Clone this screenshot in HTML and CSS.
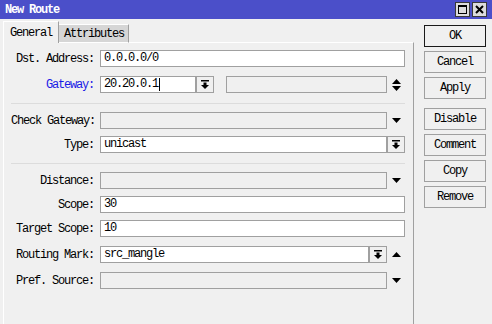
FILE: index.html
```html
<!DOCTYPE html>
<html lang="en">
<head>
    <meta charset="UTF-8">
    <title>New Route</title>
    <link rel="stylesheet" href="styles.css">
</head>
<body>
<div class="window">
    <div class="titlebar">
        <span class="title">New Route</span>
        <div class="title-btns">
            <span class="tbtn"><span class="max-box"></span></span>
            <span class="tbtn">
                <svg width="9" height="9" viewBox="0 0 9 9"><path d="M1 1L8 8M8 1L1 8" stroke="#000" stroke-width="2"/></svg>
            </span>
        </div>
    </div>
    <div class="content">
        <div class="main">
            <div class="tabs">
                <div class="tab active">General</div>
                <div class="tab">Attributes</div>
            </div>
            <div class="panel">
                <!-- destination / gateway -->
                <div class="group first">
                    <div class="row">
                        <label class="label">Dst. Address:</label>
                        <div class="field">0.0.0.0/0</div>
                    </div>
                    <div class="row spaced">
                        <label class="label link">Gateway:</label>
                        <div class="field gw">20.20.0.1<span class="caret"></span></div>
                        <span class="drop">
                            <svg width="8" height="9" viewBox="0 0 8 9"><rect x="0" y="0" width="8" height="1.5"/><rect x="2.5" y="2.5" width="3" height="3"/><path d="M0 5h8l-4 4z"/></svg>
                        </span>
                        <div class="field off gw-extra"></div>
                        <span class="arrow">
                            <svg width="9" height="12" viewBox="0 0 9 12"><path d="M0 5h9l-4.5-5z"/><path d="M0 7h9l-4.5 5z"/></svg>
                        </span>
                    </div>
                </div>

                <!-- check / type -->
                <div class="group">
                    <div class="row">
                        <label class="label">Check Gateway:</label>
                        <div class="field off"></div>
                        <span class="arrow">
                            <svg width="9" height="5" viewBox="0 0 9 5"><path d="M0 0h9l-4.5 5z"/></svg>
                        </span>
                    </div>
                    <div class="row">
                        <label class="label">Type:</label>
                        <div class="field">unicast</div>
                        <span class="drop">
                            <svg width="8" height="9" viewBox="0 0 8 9"><rect x="0" y="0" width="8" height="1.5"/><rect x="2.5" y="2.5" width="3" height="3"/><path d="M0 5h8l-4 4z"/></svg>
                        </span>
                    </div>
                </div>

                <!-- distance / scope / marks -->
                <div class="group">
                    <div class="row">
                        <label class="label">Distance:</label>
                        <div class="field off"></div>
                        <span class="arrow">
                            <svg width="9" height="5" viewBox="0 0 9 5"><path d="M0 0h9l-4.5 5z"/></svg>
                        </span>
                    </div>
                    <div class="row">
                        <label class="label">Scope:</label>
                        <div class="field">30</div>
                    </div>
                    <div class="row">
                        <label class="label">Target Scope:</label>
                        <div class="field">10</div>
                    </div>
                    <div class="row spaced">
                        <label class="label">Routing Mark:</label>
                        <div class="field">src_mangle</div>
                        <span class="drop">
                            <svg width="8" height="9" viewBox="0 0 8 9"><rect x="0" y="0" width="8" height="1.5"/><rect x="2.5" y="2.5" width="3" height="3"/><path d="M0 5h8l-4 4z"/></svg>
                        </span>
                        <span class="arrow">
                            <svg width="9" height="5" viewBox="0 0 9 5"><path d="M0 5h9l-4.5-5z"/></svg>
                        </span>
                    </div>
                    <div class="row spaced">
                        <label class="label">Pref. Source:</label>
                        <div class="field off"></div>
                        <span class="arrow">
                            <svg width="9" height="5" viewBox="0 0 9 5"><path d="M0 0h9l-4.5 5z"/></svg>
                        </span>
                    </div>
                </div>
            </div>
        </div>

        <div class="actions">
            <button class="btn default">OK</button>
            <button class="btn">Cancel</button>
            <button class="btn">Apply</button>
            <button class="btn sep">Disable</button>
            <button class="btn">Comment</button>
            <button class="btn">Copy</button>
            <button class="btn">Remove</button>
        </div>
    </div>
</div>
</body>
</html>
```

FILE: styles.css
```css
/* General */
body {
    margin: 0;
    font-family: "Liberation Mono", "DejaVu Sans Mono", monospace;
    font-size: 12px;
    letter-spacing: -1.2px;
    background-color: #f0f0f0;
    color: #000;
}

.window {
    width: 492px;
    height: 324px;
    display: flex;
    flex-direction: column;
    overflow: hidden;
}

/* Title bar */
.titlebar {
    height: 19px;
    flex-shrink: 0;
    display: flex;
    align-items: center;
    justify-content: space-between;
    padding: 0 5px 0 5px;
    background-color: #4b4fc9;
    color: #fff;
}

.title {
    font-weight: bold;
}

.title-btns {
    display: flex;
    gap: 2px;
}

.tbtn {
    width: 15px;
    height: 15px;
    box-sizing: border-box;
    display: flex;
    align-items: center;
    justify-content: center;
    background-color: #dcdcdc;
    border: 1px solid #3a3a3a;
}

.max-box {
    width: 9px;
    height: 9px;
    box-sizing: border-box;
    border: 1px solid #000;
    border-top-width: 2px;
}

/* Content */
.content {
    flex: 1;
    display: flex;
    gap: 10px;
    padding: 2px 6px 0 3px;
}

.main {
    width: 411px;
    display: flex;
    flex-direction: column;
}

/* Tabs */
.tabs {
    display: flex;
    align-items: flex-end;
    height: 22px;
}

.tabs::after {
    content: "";
    flex: 1;
    border-bottom: 1px solid #fff;
    border-right: 1px solid #a0a0a0;
}

.tab {
    box-sizing: border-box;
    display: flex;
    align-items: center;
    border-top: 1px solid #fff;
    border-right: 1px solid #a0a0a0;
}

.tab.active {
    height: 22px;
    padding: 0 6px;
    border-left: 1px solid #fff;
    background-color: #f0f0f0;
}

.tab:not(.active) {
    height: 19px;
    padding: 0 4px 0 5px;
    background-color: #d6d6d6;
    border-bottom: 1px solid #fff;
}

/* Panel */
.panel {
    flex: 1;
    border-left: 1px solid #fff;
    border-right: 1px solid #a0a0a0;
}

.group {
    width: 394px;
    margin-left: 7px;
    display: flex;
    flex-direction: column;
    gap: 7px;
    padding: 8px 0 10px;
}

.group.first {
    padding-top: 7px;
}

.group + .group {
    border-top: 1px solid #dcdcdc;
}

.row {
    display: flex;
    align-items: center;
    height: 17px;
}

.row.spaced {
    margin-top: 2px;
}

.label {
    width: 83px;
    margin-right: 6px;
    text-align: right;
    white-space: nowrap;
}

.label.link {
    color: #1a1ae6;
}

.field {
    flex: 1;
    height: 17px;
    box-sizing: border-box;
    padding: 0 3px;
    line-height: 15px;
    border: 1px solid #a0a0a0;
    background-color: #fff;
    white-space: nowrap;
}

.field.off {
    background-color: #f0f0f0;
}

.field.gw {
    flex: none;
    width: 96px;
    display: flex;
    align-items: center;
}

.field.gw-extra {
    margin-left: 12px;
}

.caret {
    width: 1px;
    height: 13px;
    margin-left: 1px;
    background-color: #000;
}

.drop {
    width: 18px;
    height: 17px;
    box-sizing: border-box;
    display: flex;
    align-items: center;
    justify-content: center;
    border: 1px solid #a0a0a0;
    background-color: #f0f0f0;
}

.arrow {
    width: 18px;
    display: flex;
    justify-content: center;
}

/* Action buttons */
.actions {
    width: 62px;
    display: flex;
    flex-direction: column;
    gap: 4px;
    padding-top: 4px;
}

.btn {
    height: 22px;
    padding: 0;
    font-family: inherit;
    font-size: 12px;
    letter-spacing: -1.2px;
    color: #000;
    background-color: #f0f0f0;
    border: 1px solid #a0a0a0;
}

.btn.default {
    border-color: #1a1a1a;
}

.btn.sep {
    margin-top: 5px;
}
```
